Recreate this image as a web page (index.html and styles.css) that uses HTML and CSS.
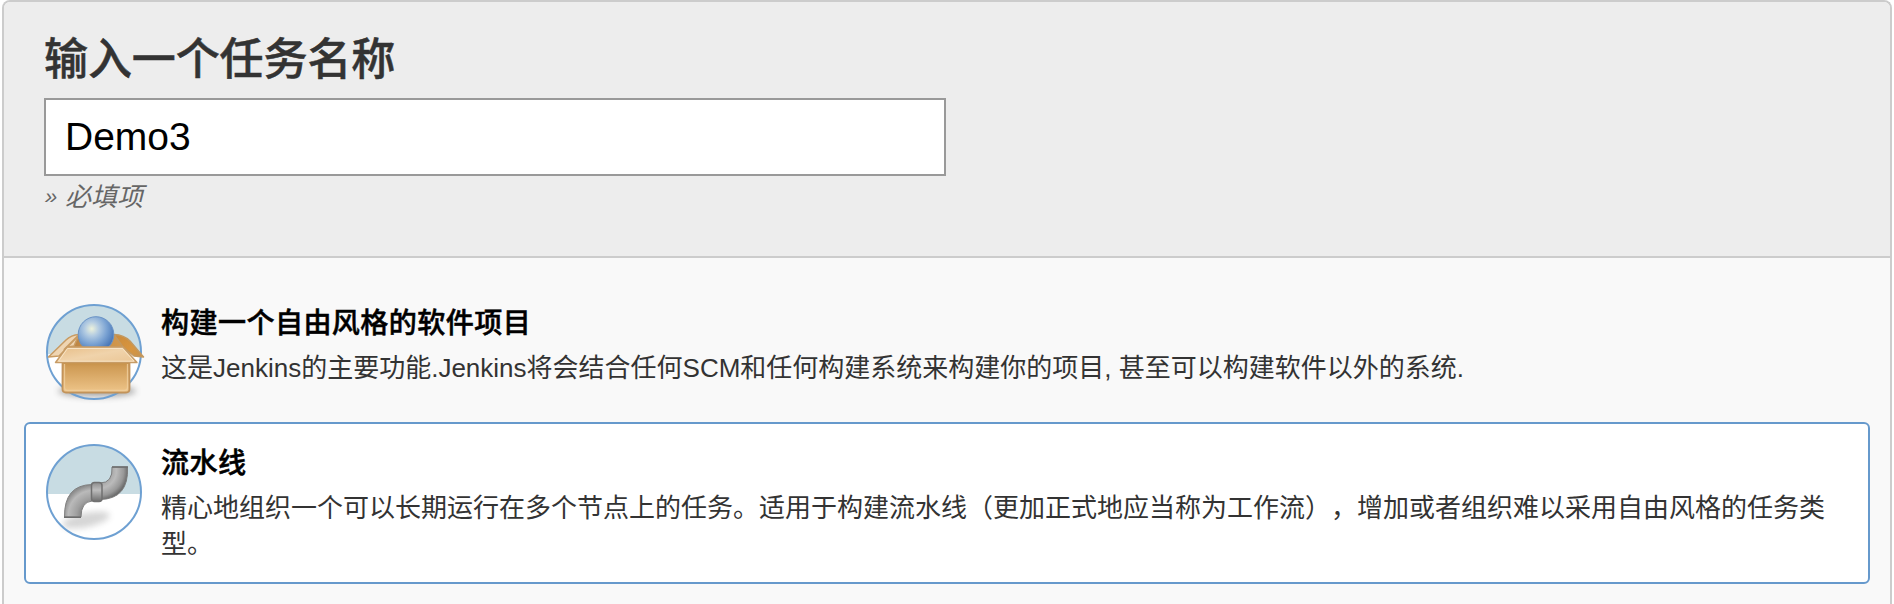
FILE: index.html
```html
<!DOCTYPE html>
<html lang="zh-CN">
<head>
<meta charset="utf-8">
<title>新建任务</title>
<link rel="stylesheet" href="styles.css">
</head>
<body>
<main class="panel">
  <header class="head">
    <label class="head-label" for="name">输入一个任务名称</label>
    <input class="name-input" id="name" type="text" value="Demo3">
    <div class="hint"><span class="hint-mark">»</span>必填项</div>
  </header>
  <ul class="items">
    <li class="item">
      <svg class="icon" viewBox="0 0 130 125">
        <defs>
          <linearGradient id="front" x1="0" y1="0" x2="0" y2="1"><stop offset="0" stop-color="#c48f47"/><stop offset=".15" stop-color="#cf9b55"/><stop offset="1" stop-color="#eec58a"/></linearGradient>
          <linearGradient id="flap" x1="0" y1="0" x2="1" y2="1"><stop offset="0" stop-color="#e7bd86"/><stop offset=".5" stop-color="#f0d3ab"/><stop offset="1" stop-color="#eac594"/></linearGradient>
          <linearGradient id="side" x1="0" y1="0" x2="1" y2="1"><stop offset="0" stop-color="#c98a3c"/><stop offset=".6" stop-color="#d8953f"/><stop offset="1" stop-color="#c5934f"/></linearGradient>
          <linearGradient id="inner" x1="0" y1="0" x2="1" y2="0"><stop offset="0" stop-color="#b98242"/><stop offset="1" stop-color="#d59a4d"/></linearGradient>
          <radialGradient id="ball" cx=".38" cy=".34" r=".65"><stop offset="0" stop-color="#edf2dc"/><stop offset=".3" stop-color="#b4cce2"/><stop offset=".65" stop-color="#7ba3d3"/><stop offset="1" stop-color="#4b79b8"/></radialGradient>
          <filter id="soft" x="-30%" y="-60%" width="160%" height="220%"><feGaussianBlur stdDeviation="3"/></filter>
          <clipPath id="disc"><circle cx="64" cy="62" r="47"/></clipPath>
        </defs>
        <circle cx="64" cy="62" r="47" fill="#fff"/>
        <path d="M17 15h94v49H17z" fill="#c8dce3" clip-path="url(#disc)"/>
        <ellipse cx="67" cy="101" rx="39" ry="6" fill="#444" opacity=".45" filter="url(#soft)"/>
        <circle cx="64" cy="62" r="47" fill="none" stroke="#6ea0d2" stroke-width="2"/>
        <path d="M36 58L46 45H84L97 58z" fill="url(#inner)"/>
        <path d="M49 44.500Q41 45 36 50L18.500 67L29 66L38 57L44 56z" fill="#efd5b2" stroke="#c89b62" stroke-width="1.500" stroke-linejoin="round"/>
        <path d="M48 46L34 60" stroke="#c99b61" stroke-width="2"/>
        <path d="M84 44.500Q94 45 100 51L113.500 67L104 66L93 57z" fill="url(#side)" stroke="#c3985f" stroke-width="1.500" stroke-linejoin="round"/>
        <circle cx="66" cy="44.500" r="17.800" fill="url(#ball)" stroke="#6a93c6" stroke-width="1"/>
        <path d="M32.500 72H99.500V99Q99.500 102.500 96 102.500H36Q32.500 102.500 32.500 99z" fill="url(#front)" stroke="#c2935a" stroke-width="1.800"/>
        <path d="M34.500 74V97.500Q34.500 100.500 37.500 100.500H94.500Q97.500 100.500 97.500 97.500V74" fill="none" stroke="#f0cf9f" stroke-opacity=".8" stroke-width="1.300"/>
        <path d="M37 57H93L107 72.500H25.500z" fill="url(#flap)" stroke="#c79c66" stroke-width="1.400" stroke-linejoin="round"/>
        <path d="M37.500 58.500H92.500L104 71.200H28.500z" fill="none" stroke="#f8e4c6" stroke-width="1"/>
      </svg>
      <div class="text">
        <h3 class="title">构建一个自由风格的软件项目</h3>
        <p class="desc">这是Jenkins的主要功能.Jenkins将会结合任何SCM和任何构建系统来构建你的项目, 甚至可以构建软件以外的系统.</p>
      </div>
    </li>
    <li class="item item-active">
      <svg class="icon" viewBox="0 0 130 125">
        <defs>
          <radialGradient id="bendA" gradientUnits="userSpaceOnUse" cx="63" cy="85" r="30"><stop offset=".38" stop-color="#858585"/><stop offset=".55" stop-color="#a0a0a0"/><stop offset=".82" stop-color="#bababa"/><stop offset="1" stop-color="#8d8d8d"/></radialGradient>
          <radialGradient id="bendB" gradientUnits="userSpaceOnUse" cx="69" cy="41" r="29"><stop offset=".4" stop-color="#a5a5a5"/><stop offset=".6" stop-color="#bbb"/><stop offset=".85" stop-color="#989898"/><stop offset="1" stop-color="#6b6b6b"/></radialGradient>
          <linearGradient id="ring" x1="0" y1="0" x2="0" y2="1"><stop offset="0" stop-color="#8d8d8d"/><stop offset=".4" stop-color="#bdbdbd"/><stop offset="1" stop-color="#6d6d6d"/></linearGradient>
        </defs>
        <circle cx="64" cy="62" r="47" fill="#fff"/>
        <path d="M17 15h94v49H17z" fill="#c8dce3" clip-path="url(#disc)"/>
        <ellipse cx="56" cy="90" rx="24" ry="7" fill="#333" opacity=".2" filter="url(#soft)" transform="rotate(-12 56 90)"/>
        <path d="M34.500 87Q34 55 62 54.500V71Q51 72 51 87z" fill="url(#bendA)" stroke="#808080" stroke-width="1"/>
        <path d="M82 37H97.500Q99 69 70 69.500V53Q83 53 82 37z" fill="url(#bendB)" stroke="#7c7c7c" stroke-width="1"/>
        <path d="M34 87.200H51M82 37H98" stroke="#6c6c6c" stroke-width="1.500"/>
        <rect x="61.500" y="52.500" width="10.500" height="19" rx="3" fill="url(#ring)" stroke="#707070" stroke-width="1.500"/>
        <circle cx="64" cy="62" r="47" fill="none" stroke="#6ea0d2" stroke-width="2"/>
      </svg>
      <div class="text">
        <h3 class="title">流水线</h3>
        <p class="desc">精心地组织一个可以长期运行在多个节点上的任务。适用于构建流水线（更加正式地应当称为工作流），增加或者组织难以采用自由风格的任务类型。</p>
      </div>
    </li>
  </ul>
</main>
</body>
</html>
```
FILE: styles.css
```css
* { box-sizing: border-box; }
body {
  margin: 0;
  background: #fff;
  color: #333;
  font: 26px/36px "Liberation Sans", "Noto Sans CJK SC", sans-serif;
  text-spacing-trim: space-all;
}
.panel {
  height: 604px;
  margin: 0 2px;
  border: 2px solid #ccc;
  border-bottom: 0;
  border-radius: 8px 8px 0 0;
  background: #f9f9f9;
}
.head {
  height: 256px;
  padding: 29px 40px 0;
  border-bottom: 2px solid #ccc;
  border-radius: 6px 6px 0 0;
  background: #ededed;
}
.head-label {
  display: block;
  height: 67px;
  font-size: 44px;
  line-height: 58px;
  font-weight: 500;
  letter-spacing: -.1px;
  -webkit-text-stroke: .5px #333;
}
.name-input {
  display: block;
  width: 902px;
  height: 78px;
  padding: 0 20px 0 19px;
  border: 2px solid #999;
  background: #fff;
  color: #000;
  font: 39px "Liberation Sans", sans-serif;
  outline: 0;
}
.hint {
  display: flex;
  padding-top: 3px;
  color: #666;
  font-style: italic;
  white-space: nowrap;
}
.hint-mark {
  width: 21px;
  padding-left: 1px;
  font-size: 22px;
}
.items {
  margin: 0;
  padding: 24px 20px 0;
  list-style: none;
}
.item {
  display: flex;
  min-height: 140px;
  padding: 18px 40px 0 4px;
  border: 2px solid transparent;
  border-radius: 6px;
}
.item-active {
  min-height: 162px;
  border-color: #69c;
  background: #fff;
}
.icon {
  flex: none;
  width: 130px;
  height: 125px;
  margin: -12px 0;
}
.text { flex: 1; margin-left: 1px; padding-top: 4px; }
.title {
  margin: 0;
  color: #000;
  font-size: 28.080px;
  line-height: 36px;
  font-weight: 500;
  letter-spacing: .4px;
  -webkit-text-stroke: .5px #000;
}
.desc { margin: 8px 0 0; }
```
